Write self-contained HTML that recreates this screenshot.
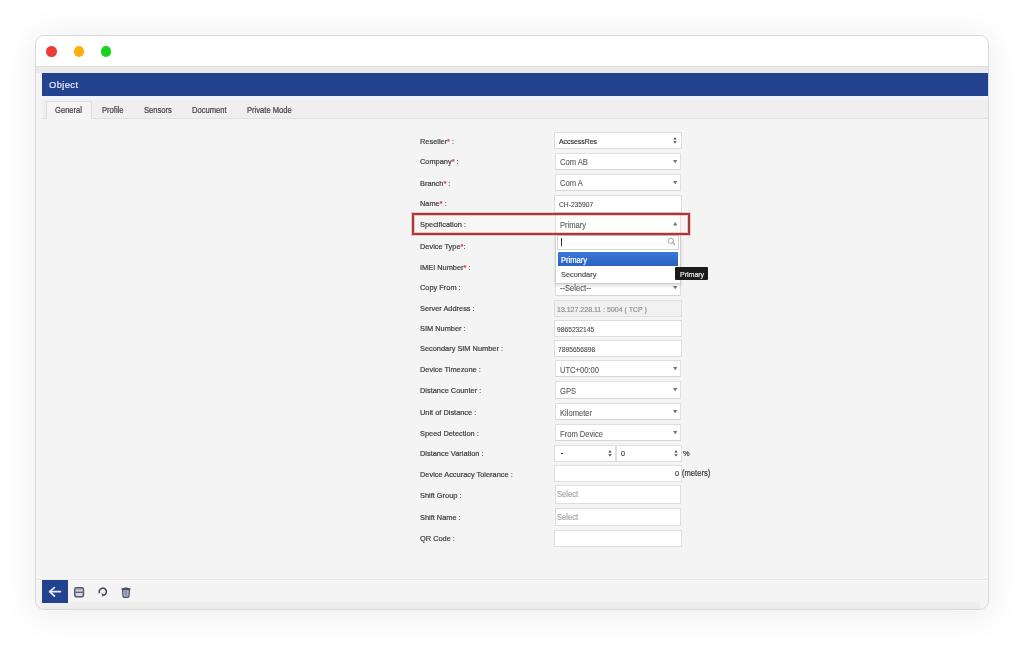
<!DOCTYPE html>
<html><head><meta charset="utf-8">
<style>
*{box-sizing:border-box;margin:0;padding:0}
html,body{width:1024px;height:645px;overflow:hidden;background:#fff;font-family:"Liberation Sans",sans-serif}
.txt,.lbl{will-change:transform;-webkit-text-stroke:0.2px currentColor;transform:scaleY(1.07);transform-origin:0 90%}
.a{position:absolute}
.win{left:35px;top:35px;width:954px;height:575px;border:1px solid #d6d9df;border-radius:9px;background:#f4f4f4;box-shadow:0 3px 36px rgba(0,0,0,0.085);overflow:hidden}
.title{left:0;top:0;right:0;height:31px;background:#fff;border-bottom:1px solid #e2e0dc}
.dot{width:10.6px;height:10.6px;border-radius:50%}
.blue{left:42px;top:73px;width:946px;height:23px;background:#22418f}
.lbl{position:absolute;left:420.3px;font-size:7.4px;color:#3c3c3c;white-space:nowrap;line-height:1}
.lbl i{font-style:normal;color:#d9333a}
.box{position:absolute;background:#fff;border:1px solid #dedede}
.s2{position:absolute;background:#fff;border:1px solid #e0e0e0;border-bottom-color:#d6d6d6}
.txt{position:absolute;white-space:nowrap;line-height:1}
.arr{position:absolute;width:0;height:0;border-left:2.5px solid transparent;border-right:2.5px solid transparent;border-top:3px solid #777}
</style></head><body>
<div class="a win">
  <div class="a title"></div>
</div>
<div class="a dot" style="left:46.1px;top:46.1px;background:#f03a3a"></div>
<div class="a dot" style="left:73.5px;top:46.1px;background:#fbb00d"></div>
<div class="a dot" style="left:100.7px;top:46.1px;background:#17d31d"></div>
<!-- gap strip -->
<div class="a" style="left:36px;top:67px;width:952px;height:6px;background:linear-gradient(#ebeae7,#e9e9e9 50%,#e7ebf5)"></div>
<div class="a blue"></div>
<div class="txt" style="left:49.3px;top:79.6px;font-size:9.4px;letter-spacing:0.38px;transform:none;color:#e3e9f8">Object</div>
<!-- tab strip -->
<div class="a" style="left:36px;top:96px;width:952px;height:4px;background:#f0f3fa"></div>
<div class="a" style="left:42px;top:100px;width:946px;height:19px;background:#efefef;border-bottom:1px solid #e0e0e0"></div>
<div class="a" style="left:45.5px;top:100.8px;width:46px;height:18.2px;background:#f4f4f4;border:1px solid #dedede;border-bottom:none"></div>
<div class="txt" style="left:55px;top:106.7px;font-size:7.6px;color:#444">General</div>
<div class="txt" style="left:102.3px;top:106.7px;font-size:7.6px;color:#444">Profile</div>
<div class="txt" style="left:144.4px;top:106.7px;font-size:7.6px;color:#444">Sensors</div>
<div class="txt" style="left:191.9px;top:106.7px;font-size:7.6px;color:#444">Document</div>
<div class="txt" style="left:247.3px;top:106.7px;font-size:7.6px;color:#444">Private Mode</div>

<div class="a" style="left:414px;top:215px;width:274px;height:18px;background:#f6f6f6"></div>
<div class="lbl" style="top:137.70px">Reseller<i>*</i> :</div>
<div class="lbl" style="top:158.30px">Company<i>*</i> :</div>
<div class="lbl" style="top:179.60px">Branch<i>*</i> :</div>
<div class="lbl" style="top:199.70px">Name<i>*</i> :</div>
<div class="lbl" style="top:220.60px">Specification :</div>
<div class="lbl" style="top:242.70px">Device Type<i>*</i>:</div>
<div class="lbl" style="top:263.80px">IMEI Number<i>*</i> :</div>
<div class="lbl" style="top:284.30px">Copy From :</div>
<div class="lbl" style="top:305.20px">Server Address :</div>
<div class="lbl" style="top:325.30px">SIM Number :</div>
<div class="lbl" style="top:345.20px">Secondary SIM Number :</div>
<div class="lbl" style="top:366.00px">Device Timezone :</div>
<div class="lbl" style="top:387.10px">Distance Counter :</div>
<div class="lbl" style="top:408.60px">Unit of Distance :</div>
<div class="lbl" style="top:429.60px">Speed Detection :</div>
<div class="lbl" style="top:450.00px">Distance Variation :</div>
<div class="lbl" style="top:470.60px">Device Accuracy Tolerance :</div>
<div class="lbl" style="top:491.80px">Shift Group :</div>
<div class="lbl" style="top:514.10px">Shift Name :</div>
<div class="lbl" style="top:535.00px">QR Code :</div>
<div class="box" style="left:554px;top:132px;width:128px;height:17px;"></div>
<div class="txt" style="left:559.0px;top:138.76px;font-size:6.9px;color:#333;">AccsessRes</div>
<svg class="a" style="left:673.1px;top:137.3px" width="4" height="7" viewBox="0 0 4 7"><path d="M0.3 2.6 L2 0.2 L3.7 2.6 Z M0.3 4.2 L3.7 4.2 L2 6.6 Z" fill="#444"/></svg>
<div class="s2" style="left:555px;top:153px;width:126px;height:17px;"></div>
<div class="txt" style="left:559.9px;top:159.37px;font-size:7.6px;color:#5a5a5a;-webkit-text-stroke:0.1px #5a5a5a">Com AB</div>
<svg class="a" style="left:672.6999999999999px;top:159.79999999999998px" width="4.4" height="3.6" viewBox="0 0 4.4 3.6"><path d="M0 0 H4.4 L2.2 3.4 Z" fill="#777"/></svg>
<div class="s2" style="left:555px;top:174px;width:126px;height:17px;"></div>
<div class="txt" style="left:559.9px;top:180.42px;font-size:7.6px;color:#5a5a5a;-webkit-text-stroke:0.1px #5a5a5a">Com A</div>
<svg class="a" style="left:672.6999999999999px;top:180.79999999999998px" width="4.4" height="3.6" viewBox="0 0 4.4 3.6"><path d="M0 0 H4.4 L2.2 3.4 Z" fill="#777"/></svg>
<div class="box" style="left:554px;top:195px;width:128px;height:18px;"></div>
<div class="txt" style="left:559.3px;top:201.54px;font-size:6.7px;color:#484848;-webkit-text-stroke:0.08px #484848">CH-235907</div>
<div class="s2" style="left:555px;top:213px;width:126px;height:22px;"></div>
<div class="txt" style="left:559.9px;top:221.92px;font-size:7.6px;color:#5a5a5a;-webkit-text-stroke:0.1px #5a5a5a">Primary</div>
<svg class="a" style="left:672.6999999999999px;top:222.2px" width="4.4" height="3.6" viewBox="0 0 4.4 3.6"><path d="M0 3.4 H4.4 L2.2 0 Z" fill="#777"/></svg>
<div class="s2" style="left:555px;top:279px;width:126px;height:17px;"></div>
<div class="txt" style="left:559.9px;top:285.42px;font-size:7.6px;color:#5a5a5a;-webkit-text-stroke:0.1px #5a5a5a">--Select--</div>
<svg class="a" style="left:672.6999999999999px;top:285.8px" width="4.4" height="3.6" viewBox="0 0 4.4 3.6"><path d="M0 0 H4.4 L2.2 3.4 Z" fill="#777"/></svg>
<div class="box" style="left:554px;top:300px;width:128px;height:17px;background:#f1f1f1"></div>
<div class="txt" style="left:556.8px;top:306.27px;font-size:7.0px;color:#929292;">13.127.228.11 : 5004 ( TCP )</div>
<div class="box" style="left:554px;top:320px;width:128px;height:17px;"></div>
<div class="txt" style="left:557.4px;top:327.14px;font-size:6.7px;color:#484848;-webkit-text-stroke:0.08px #484848">9865232145</div>
<div class="box" style="left:554px;top:340px;width:128px;height:17px;"></div>
<div class="txt" style="left:557.6px;top:347.14px;font-size:6.7px;color:#484848;-webkit-text-stroke:0.08px #484848">7895656898</div>
<div class="s2" style="left:555px;top:360px;width:126px;height:17px;"></div>
<div class="txt" style="left:559.9px;top:367.02px;font-size:7.6px;color:#5a5a5a;-webkit-text-stroke:0.1px #5a5a5a">UTC+00:00</div>
<svg class="a" style="left:672.6999999999999px;top:366.8px" width="4.4" height="3.6" viewBox="0 0 4.4 3.6"><path d="M0 0 H4.4 L2.2 3.4 Z" fill="#777"/></svg>
<div class="s2" style="left:555px;top:381px;width:126px;height:18px;"></div>
<div class="txt" style="left:559.9px;top:388.32px;font-size:7.6px;color:#5a5a5a;-webkit-text-stroke:0.1px #5a5a5a">GPS</div>
<svg class="a" style="left:672.6999999999999px;top:387.8px" width="4.4" height="3.6" viewBox="0 0 4.4 3.6"><path d="M0 0 H4.4 L2.2 3.4 Z" fill="#777"/></svg>
<div class="s2" style="left:555px;top:403px;width:126px;height:17px;"></div>
<div class="txt" style="left:559.9px;top:409.72px;font-size:7.6px;color:#5a5a5a;-webkit-text-stroke:0.1px #5a5a5a">Kilometer</div>
<svg class="a" style="left:672.6999999999999px;top:409.8px" width="4.4" height="3.6" viewBox="0 0 4.4 3.6"><path d="M0 0 H4.4 L2.2 3.4 Z" fill="#777"/></svg>
<div class="s2" style="left:555px;top:424px;width:126px;height:17px;"></div>
<div class="txt" style="left:559.9px;top:430.72px;font-size:7.6px;color:#5a5a5a;-webkit-text-stroke:0.1px #5a5a5a">From Device</div>
<svg class="a" style="left:672.6999999999999px;top:430.8px" width="4.4" height="3.6" viewBox="0 0 4.4 3.6"><path d="M0 0 H4.4 L2.2 3.4 Z" fill="#777"/></svg>
<div class="box" style="left:554px;top:445px;width:62px;height:17px;"></div>
<div class="a" style="left:560.6px;top:453px;width:2.2px;height:0.9px;background:#333"></div>
<svg class="a" style="left:607.5px;top:449.7px" width="4" height="7" viewBox="0 0 4 7"><path d="M0.3 2.6 L2 0.2 L3.7 2.6 Z M0.3 4.2 L3.7 4.2 L2 6.6 Z" fill="#444"/></svg>
<div class="box" style="left:616px;top:445px;width:66px;height:17px;"></div>
<div class="txt" style="left:620.8px;top:450.08px;font-size:7.2px;color:#444;">0</div>
<svg class="a" style="left:673.9px;top:449.7px" width="4" height="7" viewBox="0 0 4 7"><path d="M0.3 2.6 L2 0.2 L3.7 2.6 Z M0.3 4.2 L3.7 4.2 L2 6.6 Z" fill="#444"/></svg>
<div class="txt" style="left:683.0px;top:450.00px;font-size:7.4px;color:#3c3c3c;">%</div>
<div class="box" style="left:554px;top:465px;width:128px;height:17px;"></div>
<div class="txt" style="left:675.0px;top:470.40px;font-size:7.4px;color:#444;">0</div>
<div class="txt" style="left:682.4px;top:470.42px;font-size:7.6px;color:#3c3c3c;">(meters)</div>
<div class="box" style="left:555px;top:485px;width:126px;height:19px;"></div>
<div class="txt" style="left:556.9px;top:491.22px;font-size:7.6px;color:#a8a8a8;">Select</div>
<div class="box" style="left:555px;top:508px;width:126px;height:18px;"></div>
<div class="txt" style="left:556.9px;top:513.92px;font-size:7.6px;color:#a8a8a8;">Select</div>
<div class="box" style="left:554px;top:530px;width:128px;height:17px;"></div>
<div class="a" style="left:555px;top:235px;width:126px;height:49px;background:#fff;border:1px solid #cfcfcf;border-top:none;box-shadow:0 2px 3px rgba(0,0,0,0.13)"></div>
<div class="box" style="left:557px;top:235px;width:122px;height:15px;border-color:#d3d3d3"></div>
<div class="a" style="left:561.2px;top:237.5px;width:0.9px;height:8.5px;background:#333"></div>
<svg class="a" style="left:667px;top:237px" width="9" height="9" viewBox="0 0 9 9"><circle cx="3.8" cy="3.8" r="2.6" fill="none" stroke="#999" stroke-width="0.9"/><line x1="5.7" y1="5.7" x2="8" y2="8" stroke="#999" stroke-width="1.1"/></svg>
<div class="a" style="left:558px;top:252px;width:120px;height:14px;background:linear-gradient(#3a77d6,#2a62c2)"></div>
<div class="txt" style="left:561.4px;top:256.92px;font-size:7.6px;color:#fff;">Primary</div>
<div class="txt" style="left:561.4px;top:271.10px;font-size:7.4px;color:#555;">Secondary</div>
<div class="a" style="left:412px;top:213px;width:278px;height:22px;border:2px solid #ab393c;box-shadow:0 0 0 1px rgba(215,110,110,0.35), inset 0 0 0 1px rgba(215,110,110,0.35)"></div>
<div class="a" style="left:675px;top:267px;width:33px;height:13px;background:#1b1b1b;border-radius:1px"></div>
<div class="txt" style="left:679.6px;top:271.47px;font-size:7.0px;color:#eaeaea;">Primary</div>
<!-- footer -->
<div class="a" style="left:36px;top:579px;width:952px;height:1px;background:#e8e8e8"></div>
<div class="a" style="left:36px;top:580px;width:952px;height:1px;background:#f9f9f9"></div>
<div class="a" style="left:44px;top:602px;width:936px;height:7px;background:linear-gradient(#f0f0f0,#eaeaea)"></div>
<div class="a" style="left:42px;top:580px;width:26px;height:22.5px;background:#22418f"></div>
<svg class="a" style="left:42px;top:580px" width="26" height="23" viewBox="0 0 26 23"><path d="M18.4 11.7 H7.8 M12.4 7.6 L7.6 11.7 L12.4 16.0" fill="none" stroke="#e4eafb" stroke-width="1.7" stroke-linecap="round" stroke-linejoin="round"/></svg>
<svg class="a" style="left:73px;top:586px" width="12" height="12" viewBox="0 0 12 12"><rect x="1.8" y="1.8" width="8.6" height="8.9" rx="1.5" fill="#d2d8e6" stroke="#50556c" stroke-width="1.5"/><rect x="2.6" y="5.6" width="7" height="1.3" fill="#50556c"/><rect x="3.4" y="2.6" width="5.4" height="1.2" fill="#8a90a6"/></svg>
<svg class="a" style="left:97px;top:585.5px" width="12" height="12" viewBox="0 0 12 12"><path d="M2.5 7.2 A3.6 3.6 0 1 1 6.6 9.3" fill="none" stroke="#454a60" stroke-width="1.6"/><path d="M4.6 7.3 L7.6 8.7 L5.3 10.7 Z" fill="#454a60"/></svg>
<svg class="a" style="left:119.5px;top:585.5px" width="12" height="13" viewBox="0 0 12 13"><path d="M1.6 3.0 Q6 0.6 10.4 3.0 Z" fill="#4b4f66" stroke="#4b4f66" stroke-width="0.8" stroke-linejoin="round"/><path d="M2.5 3.6 H9.5 L9.0 10.4 Q8.8 11.3 7.9 11.3 H4.1 Q3.2 11.3 3.0 10.4 Z" fill="#aab4d0" stroke="#4b4f66" stroke-width="1.2"/><path d="M6 5.0 V9.8" stroke="#5a5f78" stroke-width="0.9"/></svg>

</body></html>
